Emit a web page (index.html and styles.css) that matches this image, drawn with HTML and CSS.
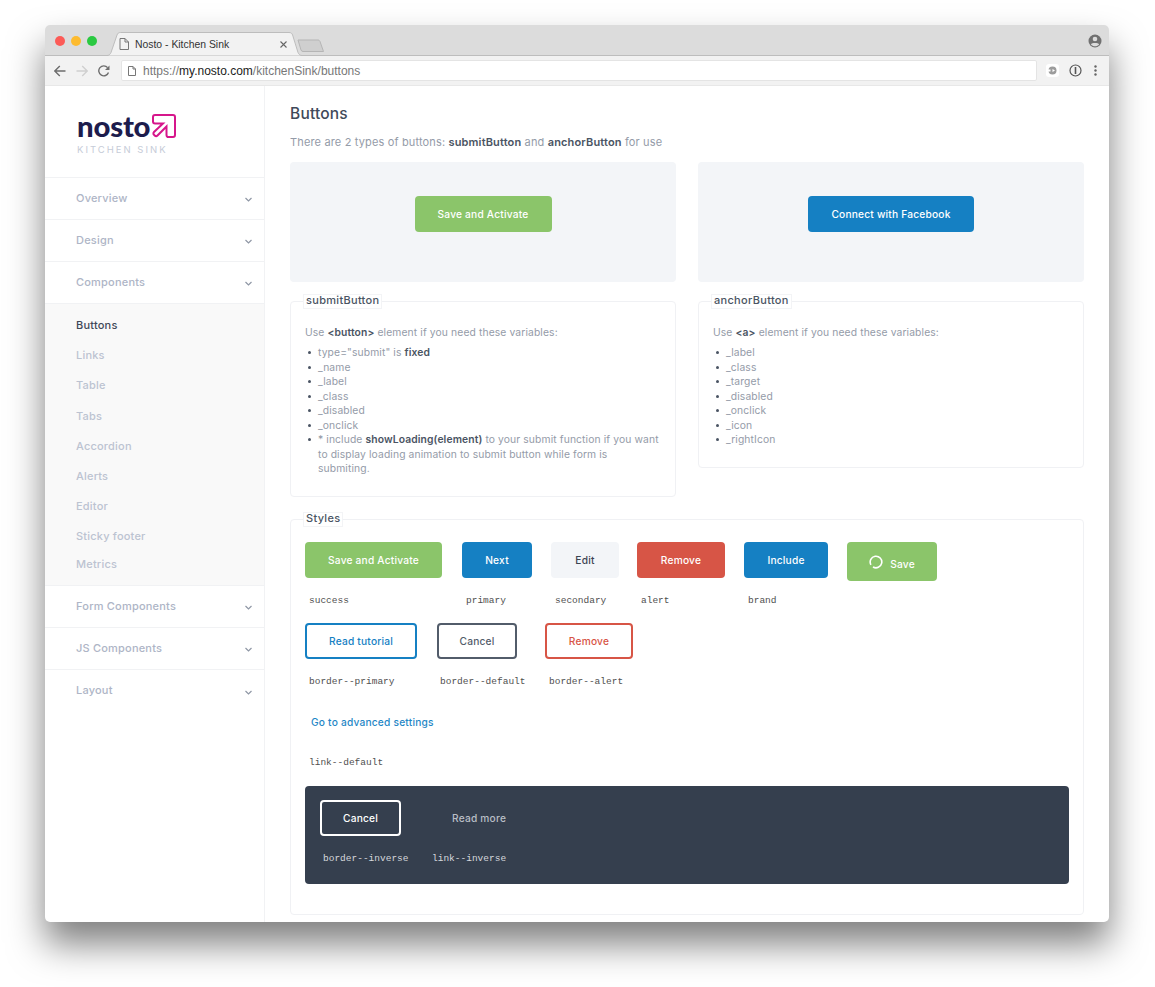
FILE: index.html
```html
<!DOCTYPE html>
<html lang="en">
<head>
    <meta charset="UTF-8">
    <title>Nosto - Kitchen Sink</title>
    <link rel="stylesheet" href="styles.css">
</head>
<body>

<div class="window">
    <div class="tabbar">
        <div class="lights">
            <span class="light red"></span>
            <span class="light yellow"></span>
            <span class="light green"></span>
        </div>
        <div class="tab">
            <svg class="tab-shape" width="198" height="24" viewBox="0 0 198 24"><path d="M0 23.500H2C4 23.500 5 22.500 6 20.500L12 3C12.600 1.400 13.600 .5 15.500 .5H184C186 .5 187 1.400 187.600 3L193 20.500C194 22.500 195 23.500 197 23.500H198" fill="#f2f2f2" stroke="#bdbdbd"/></svg>
            <svg class="tab-file" width="10" height="12" viewBox="0 0 10 12"><path d="M1 .5H6L9.500 4V11.500H1ZM6 .5V4H9.500" fill="none" stroke="#777"/></svg>
            <span class="tab-title">Nosto - Kitchen Sink</span>
            <svg class="tab-close" width="7" height="7" viewBox="0 0 7 7"><path d="M.5.5L6.500 6.500M6.500.5L.5 6.500" stroke="#666" stroke-width="1.100"/></svg>
        </div>
        <svg class="newtab" width="28" height="14" viewBox="0 0 28 14"><path d="M1 1H21C22 1 22.500 1.500 23 2.500L26.500 12.500H6C5 12.500 4.500 12 4 11Z" fill="#cfcfcf" stroke="#b5b5b5"/></svg>
        <svg class="account" width="14" height="14" viewBox="0 0 14 14"><circle cx="7" cy="7" r="6.500" fill="#717171"/><circle cx="7" cy="5" r="2.300" fill="#dcdcdc"/><path d="M2.800 10.300C4 8.500 10 8.500 11.200 10.300C10 11.800 8.500 12.300 7 12.300S4 11.800 2.800 10.300Z" fill="#dcdcdc"/></svg>
    </div>

    <div class="toolbar">
        <svg class="nav-icon" width="12" height="12" viewBox="0 0 12 12"><path d="M11.500 6H1M5.800 1L.8 6L5.800 11" fill="none" stroke="#6e6e6e" stroke-width="1.400"/></svg>
        <svg class="nav-icon" width="12" height="12" viewBox="0 0 12 12"><path d="M.5 6H11M6.200 1L11.200 6L6.200 11" fill="none" stroke="#d0d0d0" stroke-width="1.400"/></svg>
        <svg class="nav-icon" width="12" height="12" viewBox="0 0 12 12"><path d="M10.500 7.500A5 5 0 1 1 9.600 2.600" fill="none" stroke="#6e6e6e" stroke-width="1.400"/><path d="M11.500 .5V5H7Z" fill="#6e6e6e"/></svg>
        <div class="urlbar">
            <svg width="8" height="10" viewBox="0 0 8 10"><path d="M.5.5H5L7.500 3V9.500H.5ZM5 .5V3H7.500" fill="none" stroke="#777"/></svg>
            <span class="url">https://<b>my.nosto.com</b>/kitchenSink/buttons</span>
        </div>
        <div class="ext-box">
            <svg width="9" height="9" viewBox="0 0 9 9"><circle cx="4.500" cy="4.500" r="4" fill="#9c9c9c"/><path d="M4.500 3L7 4.500L4.500 6ZM0 3.500H2.500V5.500H0Z" fill="#fff"/></svg>
        </div>
        <svg class="ext-icon" width="13" height="13" viewBox="0 0 13 13"><circle cx="6.500" cy="6.500" r="5.500" fill="none" stroke="#555" stroke-width="1.200"/><path d="M6.500 3V10" stroke="#555" stroke-width="1.600"/></svg>
        <svg class="menu-icon" width="3" height="11" viewBox="0 0 3 11"><circle cx="1.500" cy="1.500" r="1.200" fill="#666"/><circle cx="1.500" cy="5.500" r="1.200" fill="#666"/><circle cx="1.500" cy="9.500" r="1.200" fill="#666"/></svg>
    </div>

    <div class="page">
        <div class="sidebar">
            <div class="logo">
                <div class="logo-mark">
                    <span class="logo-word">nosto</span>
                    <svg width="24" height="24" viewBox="0 0 24 24"><path d="M3 1H21C22.200 1 23 1.800 23 3V21C23 22.200 22.200 23 21 23H16.500C15.300 23 14.500 22.200 14.500 21V12.500L5.500 21.500C4.700 22.300 3.500 22.300 2.700 21.500L2 20.800C1.200 20 1.200 18.800 2 18L11 9.500H3C1.800 9.500 1 8.700 1 7.500V3C1 1.800 1.800 1 3 1Z" fill="none" stroke="#d6168b" stroke-width="2"/></svg>
                </div>
                <div class="logo-sub">KITCHEN SINK</div>
            </div>
            <div class="nav-head">Overview<svg class="chev" width="7" height="5" viewBox="0 0 7 5"><path d="M.5 1L3.500 4L6.500 1" fill="none" stroke="#8f97a5" stroke-width="1.200"/></svg></div>
            <div class="nav-head">Design<svg class="chev" width="7" height="5" viewBox="0 0 7 5"><path d="M.5 1L3.500 4L6.500 1" fill="none" stroke="#8f97a5" stroke-width="1.200"/></svg></div>
            <div class="nav-head">Components<svg class="chev" width="7" height="5" viewBox="0 0 7 5"><path d="M.5 1L3.500 4L6.500 1" fill="none" stroke="#8f97a5" stroke-width="1.200"/></svg></div>
            <div class="subnav">
                <div class="subnav-item active">Buttons</div>
                <div class="subnav-item">Links</div>
                <div class="subnav-item">Table</div>
                <div class="subnav-item">Tabs</div>
                <div class="subnav-item">Accordion</div>
                <div class="subnav-item">Alerts</div>
                <div class="subnav-item">Editor</div>
                <div class="subnav-item">Sticky footer</div>
                <div class="subnav-item short">Metrics</div>
            </div>
            <div class="nav-head">Form Components<svg class="chev" width="7" height="5" viewBox="0 0 7 5"><path d="M.5 1L3.500 4L6.500 1" fill="none" stroke="#8f97a5" stroke-width="1.200"/></svg></div>
            <div class="nav-head">JS Components<svg class="chev" width="7" height="5" viewBox="0 0 7 5"><path d="M.5 1L3.500 4L6.500 1" fill="none" stroke="#8f97a5" stroke-width="1.200"/></svg></div>
            <div class="nav-head last">Layout<svg class="chev" width="7" height="5" viewBox="0 0 7 5"><path d="M.5 1L3.500 4L6.500 1" fill="none" stroke="#8f97a5" stroke-width="1.200"/></svg></div>
        </div>

        <div class="main">
            <h1>Buttons</h1>
            <p class="intro">There are 2 types of buttons: <b>submitButton</b> and <b>anchorButton</b> for use</p>

            <div class="two-col">
                <div class="demo"><button class="btn success wide">Save and Activate</button></div>
                <div class="demo"><button class="btn primary fb">Connect with Facebook</button></div>
            </div>

            <div class="two-col docs">
                <fieldset class="card card-submit">
                    <legend>submitButton</legend>
                    <p>Use <b>&lt;button&gt;</b> element if you need these variables:</p>
                    <ul>
                        <li>type="submit" is <b>fixed</b></li>
                        <li>_name</li>
                        <li>_label</li>
                        <li>_class</li>
                        <li>_disabled</li>
                        <li>_onclick</li>
                        <li>* include <b>showLoading(element)</b> to your submit function if you want to display loading animation to submit button while form is<br>submiting.</li>
                    </ul>
                </fieldset>
                <fieldset class="card card-anchor">
                    <legend>anchorButton</legend>
                    <p>Use <b>&lt;a&gt;</b> element if you need these variables:</p>
                    <ul>
                        <li>_label</li>
                        <li>_class</li>
                        <li>_target</li>
                        <li>_disabled</li>
                        <li>_onclick</li>
                        <li>_icon</li>
                        <li>_rightIcon</li>
                    </ul>
                </fieldset>
            </div>

            <fieldset class="card card-styles">
                <legend>Styles</legend>
                <div class="row row-solid">
                    <div><button class="btn success">Save and Activate</button><code>success</code></div>
                    <div><button class="btn primary">Next</button><code>primary</code></div>
                    <div><button class="btn secondary">Edit</button><code>secondary</code></div>
                    <div><button class="btn alert">Remove</button><code>alert</code></div>
                    <div><button class="btn primary">Include</button><code>brand</code></div>
                    <div><button class="btn success loading"><svg width="14" height="14" viewBox="0 0 14 14"><path d="M1.900 9.800A5.800 5.800 0 1 1 4 12" fill="none" stroke="#fff" stroke-width="1.600"/></svg><span>Save</span></button></div>
                </div>
                <div class="row row-border">
                    <div><button class="btn border-primary">Read tutorial</button><code>border--primary</code></div>
                    <div><button class="btn border-default">Cancel</button><code>border--default</code></div>
                    <div><button class="btn border-alert">Remove</button><code>border--alert</code></div>
                </div>
                <a class="link-default">Go to advanced settings</a>
                <code class="link-label">link--default</code>
                <div class="inverse">
                    <div class="row row-inverse">
                        <div><button class="btn border-inverse">Cancel</button><code>border--inverse</code></div>
                        <div><a class="link-inverse">Read more</a><code>link--inverse</code></div>
                    </div>
                </div>
            </fieldset>
        </div>
    </div>
</div>

</body>
</html>
```

FILE: styles.css
```css
html, body {
    margin: 0;
    background-color: #fff;
}

body {
    height: 987px;
    overflow: hidden;
    padding: 25px 0 0 45px;
    box-sizing: border-box;
    font-family: Inter, "Open Sans", sans-serif;
    color: #949ba8;
}

.window {
    width: 1064px;
    height: 897px;
    border-radius: 5px;
    overflow: hidden;
    background-color: #fff;
    box-shadow: 0 22px 36px rgba(0, 0, 0, 0.5);
}

/* browser chrome */
.tabbar {
    height: 31px;
    background-color: #dcdcdc;
    border-bottom: 1px solid #bdbdbd;
    box-sizing: border-box;
    display: flex;
    align-items: flex-end;
}

.lights {
    display: flex;
    gap: 6px;
    align-self: flex-start;
    margin: 11px 0 0 10px;
}

.light {
    width: 10px;
    height: 10px;
    border-radius: 50%;
}

.red { background-color: #fc5b57; }
.yellow { background-color: #fdbb2f; }
.green { background-color: #2ac941; }

.tab {
    position: relative;
    width: 186px;
    height: 24px;
    margin: 0 0 -1px 8px;
    display: flex;
    align-items: center;
    padding-left: 14px;
    box-sizing: border-box;
    font-family: "Liberation Sans", Arial, sans-serif;
    font-size: 10.400px;
    color: #333;
}

.tab-shape {
    position: absolute;
    left: 0;
    top: 0;
}

.tab-file {
    position: relative;
    margin-right: 6px;
}

.tab-title {
    position: relative;
    width: 145px;
}

.tab-close {
    position: relative;
}

.newtab {
    margin: 0 0 2px 6px;
}

.account {
    margin: 0 7px 7px auto;
}

.toolbar {
    height: 30px;
    background-color: #f2f2f2;
    border-bottom: 1px solid #e8e8e8;
    box-sizing: border-box;
    display: flex;
    align-items: center;
    padding: 0 11px 0 9px;
}

.nav-icon {
    margin-right: 10px;
}

.urlbar {
    width: 916px;
    height: 21px;
    margin-left: 1px;
    background-color: #fff;
    border: 1px solid #e4e4e4;
    border-radius: 2px;
    box-sizing: border-box;
    display: flex;
    align-items: center;
    gap: 7px;
    padding-left: 6px;
    font-family: "Liberation Sans", Arial, sans-serif;
    font-size: 12px;
    color: #777;
}

.url b {
    font-weight: normal;
    color: #222;
}

.ext-box {
    width: 13px;
    height: 13px;
    margin-left: 9px;
    background-color: #fff;
    border-radius: 3px;
    display: flex;
    align-items: center;
    justify-content: center;
}

.ext-icon {
    margin-left: 10px;
}

.menu-icon {
    margin-left: 12px;
}

/* page */
.page {
    height: 836px;
    display: flex;
}

.sidebar {
    width: 220px;
    flex: none;
    border-right: 1px solid #f1f2f4;
    box-sizing: border-box;
}

.logo {
    height: 92px;
    padding: 28px 0 0 32px;
    box-sizing: border-box;
    border-bottom: 1px solid #f1f2f4;
}

.logo-mark {
    display: flex;
    align-items: center;
    gap: 2px;
    height: 24px;
}

.logo-word {
    font-family: Lato, sans-serif;
    font-size: 29.300px;
    font-weight: 900;
    letter-spacing: -0.2px;
    color: #1d1c4d;
    line-height: 24px;
}

.logo-sub {
    margin-top: 6px;
    font-size: 9.500px;
    letter-spacing: 2px;
    color: #c6ccd8;
}

.nav-head {
    height: 42px;
    box-sizing: border-box;
    border-bottom: 1px solid #f1f2f4;
    display: flex;
    align-items: center;
    justify-content: space-between;
    padding: 0 12px 2px 31px;
    font-size: 11px;
    font-weight: 500;
    color: #aeb5c6;
    letter-spacing: 0.2px;
}

.nav-head.last {
    border-bottom: 0;
}

.chev {
    margin-top: 4px;
}

.subnav {
    height: 282px;
    background-color: #f9f9f9;
    border-bottom: 1px solid #f1f2f4;
    box-sizing: border-box;
    padding: 6px 0 0 31px;
}

.subnav-item {
    height: 30.200px;
    line-height: 30.200px;
    font-size: 11px;
    font-weight: 500;
    color: #bcc3d1;
    letter-spacing: 0.2px;
}

.subnav-item.active {
    color: #3f4858;
}

.subnav-item.short {
    height: 24px;
    line-height: 24px;
}

.main {
    flex: 1;
    padding: 0 25px;
    min-width: 0;
}

h1 {
    margin: 19px 0 0;
    font-size: 15.500px;
    line-height: 18px;
    font-weight: 500;
    color: #3f4a5a;
    letter-spacing: 0.2px;
}

.intro {
    margin: 11px 0 0;
    font-size: 11px;
    line-height: 16px;
    letter-spacing: 0.15px;
}

b {
    font-weight: 600;
    color: #4a5463;
}

.two-col {
    display: flex;
    gap: 22px;
}

.demo {
    flex: 1;
    height: 120px;
    margin-top: 12px;
    background-color: #f3f5f8;
    border-radius: 4px;
    display: flex;
    justify-content: center;
    padding-top: 34px;
    box-sizing: border-box;
}

.card {
    margin: 0;
    padding: 0 14px;
    border: 1px solid #f0f1f4;
    border-radius: 4px;
    min-width: 0;
    box-sizing: border-box;
}

.card legend {
    margin-left: -2px;
    padding: 0 2px;
    height: 15px;
    line-height: 10px;
    box-sizing: border-box;
    border: 1px solid #f3f4f6;
    font-size: 11px;
    font-weight: 500;
    color: #4a5463;
    letter-spacing: 0.3px;
}

.docs {
    margin-top: 12px;
    align-items: flex-start;
}

.docs .card {
    flex: 1;
    font-size: 10.300px;
    line-height: 14.450px;
    letter-spacing: 0.12px;
}

.card-submit { height: 203px; }
.card-anchor { height: 174px; }

.docs p {
    margin: 16px 0 0;
}

.docs ul {
    margin: 6px 0 0;
    padding: 0;
    list-style: none;
}

.docs li {
    position: relative;
    padding-left: 13px;
}

.docs li::before {
    content: "";
    position: absolute;
    left: 3px;
    top: 6px;
    width: 3px;
    height: 3px;
    border-radius: 50%;
    background-color: #4a5463;
}

.card-styles {
    margin-top: 15px;
    height: 403px;
}

.btn {
    display: block;
    border: 0;
    padding: 0;
    height: 36px;
    border-radius: 4px;
    font-family: Inter, sans-serif;
    font-size: 10.200px;
    font-weight: 500;
    letter-spacing: 0.2px;
    color: #fff;
}

.success { width: 137px; background-color: #8bc56a; }
.primary { width: 70px; background-color: #1580c3; }
.secondary { width: 68px; background-color: #f3f5f8; color: #3b4452; }
.alert { width: 88px; background-color: #d75546; }

.row-solid > div:nth-child(5) .btn { width: 84px; }

.fb { width: 166px; }

.loading {
    width: 90px;
    height: 39px;
    display: flex;
    align-items: center;
    justify-content: center;
    gap: 7px;
}

.loading span {
    margin-top: 5px;
}

.row {
    display: grid;
}

.row-solid {
    margin-top: 15px;
    grid-template-columns: 157px 89px 86px 107px 103px 90px;
}

.row-border {
    margin-top: 0;
    grid-template-columns: 132px 108px 88px;
}

.border-primary, .border-default, .border-alert, .border-inverse {
    background-color: transparent;
    border: 2px solid;
}

.border-primary { width: 112px; border-color: #1580c3; color: #1580c3; }
.border-default { width: 80px; border-color: #525c6a; color: #525c6a; }
.border-alert { width: 88px; border-color: #d75546; color: #d75546; }
.border-inverse { width: 81px; border-color: #fff; color: #fff; }

code {
    display: block;
    margin: 17px 0 16px 4px;
    height: 12px;
    font-family: "Liberation Mono", monospace;
    font-size: 9.500px;
    line-height: 12px;
    color: #4f4f4f;
}

.row-border > div:nth-child(2) code {
    margin-left: 3px;
}

.link-default {
    display: block;
    margin: 11px 0 0 6px;
    font-size: 10.200px;
    line-height: 14px;
    font-weight: 500;
    color: #1f87c6;
    letter-spacing: 0.2px;
}

code.link-label {
    margin: 28px 0 17px 4px;
}

.inverse {
    height: 98px;
    background-color: #353f4e;
    border-radius: 4px;
    padding: 14px 0 0 15px;
    box-sizing: border-box;
}

.row-inverse {
    grid-template-columns: 112px 100px;
}

.row-inverse code {
    margin-top: 17px;
    color: #d5d8dd;
}

.row-inverse > div:first-child code {
    margin-left: 3px;
}

.row-inverse > div:last-child code {
    margin-left: 0;
}

.link-inverse {
    display: block;
    height: 36px;
    line-height: 36px;
    margin-left: 20px;
    font-size: 10.200px;
    font-weight: 500;
    color: #b9bec6;
    letter-spacing: 0.2px;
}
```
